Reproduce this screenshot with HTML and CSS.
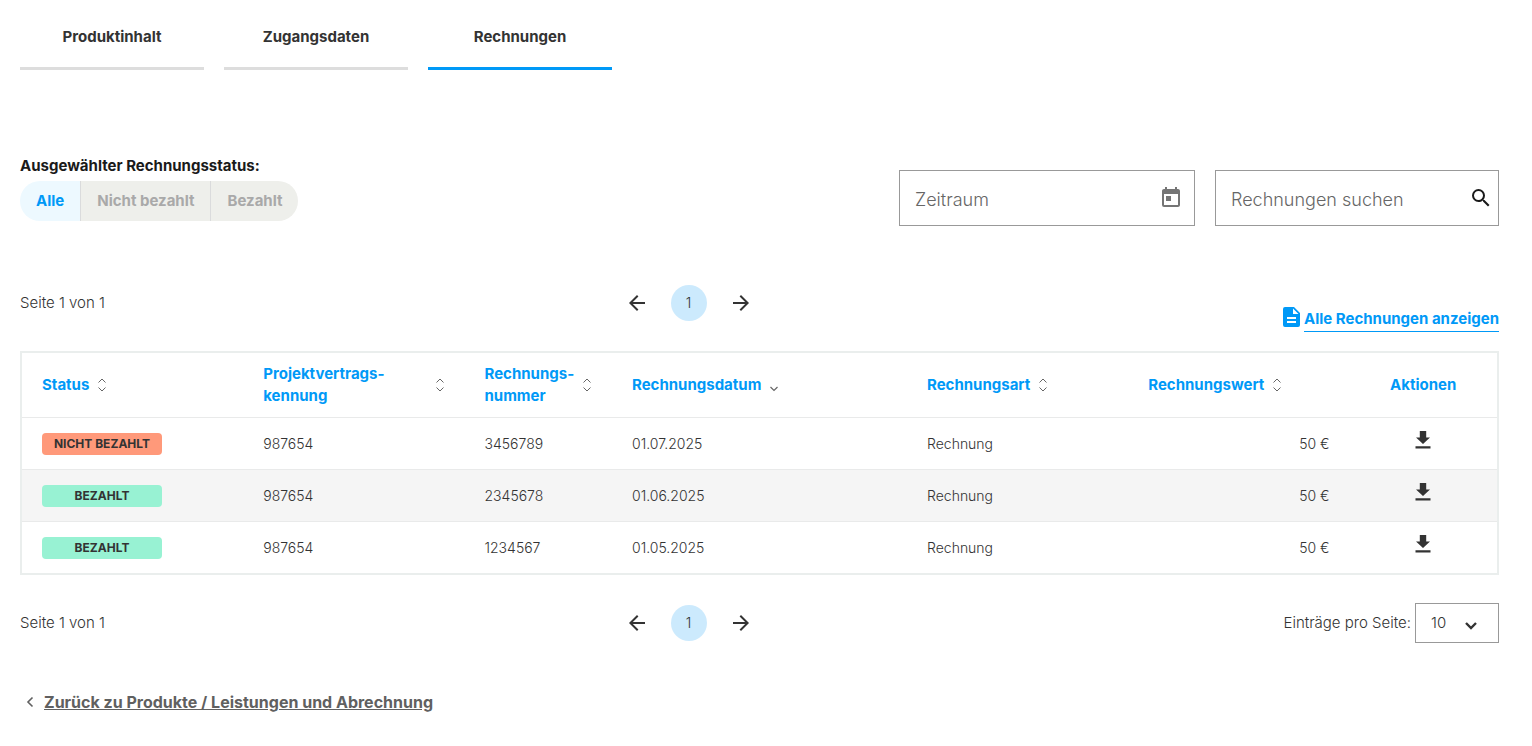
FILE: index.html
```html
<!DOCTYPE html>
<html lang="de">
<head>
<meta charset="utf-8">
<meta name="viewport" content="width=device-width, initial-scale=1">
<title>Rechnungen</title>
<link rel="stylesheet" href="styles.css">
</head>
<body>
<svg class="sprite" aria-hidden="true">
  <symbol id="sort" viewBox="0 0 10 14"><path d="M1.5 4.5 5 1l3.500 3.500M1.500 9.500 5 13l3.500-3.500" fill="none" stroke="currentColor"/></symbol>
  <symbol id="sort-down" viewBox="0 0 10 14"><path d="M1.500 9 5 12.500 8.500 9" fill="none" stroke="currentColor" stroke-width="1.200"/></symbol>
  <symbol id="download" viewBox="0 0 24 24"><path d="M19 9.500h-3.800v-6.500h-6.400v6.500H5l7 6.500zM4.500 18.200v2.200h15v-2.200z" fill="currentColor"/></symbol>
  <symbol id="arrow-left" viewBox="0 0 24 24"><path d="M20 11H7.830l5.590-5.590L12 4l-8 8 8 8 1.410-1.410L7.830 13H20z" fill="currentColor"/></symbol>
  <symbol id="arrow-right" viewBox="0 0 24 24"><path d="m12 4-1.410 1.410L16.170 11H4v2h12.170l-5.580 5.590L12 20l8-8z" fill="currentColor"/></symbol>
</svg>

<main class="page">
  <nav class="tabs">
    <a class="tab" href="#produktinhalt">Produktinhalt</a>
    <a class="tab" href="#zugangsdaten">Zugangsdaten</a>
    <a class="tab tab-active" href="#rechnungen" aria-current="page">Rechnungen</a>
  </nav>

  <section class="filters">
    <div class="status-filter">
      <h2 class="filter-title" id="status-title">Ausgewählter Rechnungsstatus:</h2>
      <div class="toggle" role="group" aria-labelledby="status-title">
        <button class="toggle-item toggle-active" type="button" aria-pressed="true">Alle</button>
        <button class="toggle-item" type="button" aria-pressed="false">Nicht bezahlt</button>
        <button class="toggle-item" type="button" aria-pressed="false">Bezahlt</button>
      </div>
    </div>
    <div class="fields">
      <div class="field field-period">
        <input class="field-input" type="text" placeholder="Zeitraum" aria-label="Zeitraum">
        <button class="icon-button calendar" type="button" aria-label="Kalender öffnen">
          <svg width="24" height="24" viewBox="0 0 24 24"><path d="M19 3h-1V1h-2v2H8V1H6v2H5c-1.110 0-1.990.900-1.990 2L3 19a2 2 0 0 0 2 2h14c1.100 0 2-.900 2-2V5c0-1.100-.900-2-2-2zm0 16H5V8h14v11zM7 10h5v5H7z" fill="currentColor"/></svg>
        </button>
      </div>
      <div class="field field-search">
        <input class="field-input" type="text" placeholder="Rechnungen suchen" aria-label="Rechnungen suchen">
        <button class="icon-button" type="button" aria-label="Suchen">
          <svg width="24" height="24" viewBox="0 0 24 24"><path d="M15.500 14h-.790l-.280-.270A6.471 6.471 0 0 0 16 9.500 6.500 6.500 0 1 0 9.500 16c1.610 0 3.090-.590 4.230-1.570l.270.280v.790l5 4.990L20.490 19l-4.990-5zm-6 0C7.010 14 5 11.990 5 9.500S7.010 5 9.500 5 14 7.010 14 9.500 11.990 14 9.500 14z" fill="currentColor"/></svg>
        </button>
      </div>
    </div>
  </section>

  <div class="pager-row">
    <span class="page-info">Seite 1 von 1</span>
    <div class="pager">
      <button class="icon-button" type="button" aria-label="Vorherige Seite"><svg width="24" height="24"><use href="#arrow-left"/></svg></button>
      <button class="page-number" type="button" aria-current="page">1</button>
      <button class="icon-button" type="button" aria-label="Nächste Seite"><svg width="24" height="24"><use href="#arrow-right"/></svg></button>
    </div>
    <div class="pager-end all-invoices">
      <svg width="17" height="20" viewBox="0 0 17 20"><path d="M2 0h9l6 6v12a2 2 0 0 1-2 2H2a2 2 0 0 1-2-2V2a2 2 0 0 1 2-2zm8 1.500V7h5.500zM4 10v2h9v-2zm0 4v2h9v-2z" fill="currentColor" fill-rule="evenodd"/></svg>
      <a class="all-link" href="#alle">Alle Rechnungen anzeigen</a>
    </div>
  </div>

  <div class="table-frame">
    <table class="invoices">
      <colgroup><col class="w15"><col class="w15"><col class="w10"><col class="w20"><col class="w15"><col class="w15"><col class="w10"></colgroup>
      <thead>
        <tr>
          <th><button class="sort" type="button">Status<svg width="10" height="14"><use href="#sort"/></svg></button></th>
          <th><button class="sort" type="button"><span>Projektvertrags-<wbr>kennung</span><svg width="10" height="14"><use href="#sort"/></svg></button></th>
          <th><button class="sort" type="button"><span>Rechnungs-<wbr>nummer</span><svg width="10" height="14"><use href="#sort"/></svg></button></th>
          <th aria-sort="descending"><button class="sort" type="button">Rechnungsdatum<svg width="10" height="14"><use href="#sort-down"/></svg></button></th>
          <th><button class="sort" type="button">Rechnungsart<svg width="10" height="14"><use href="#sort"/></svg></button></th>
          <th><button class="sort" type="button">Rechnungswert<svg width="10" height="14"><use href="#sort"/></svg></button></th>
          <th class="actions">Aktionen</th>
        </tr>
      </thead>
      <tbody>
        <tr>
          <td><span class="badge badge-open">NICHT BEZAHLT</span></td>
          <td>987654</td><td>3456789</td><td>01.07.2025</td><td>Rechnung</td><td class="amount">50 €</td>
          <td class="actions"><button class="icon-button download" type="button" aria-label="Rechnung 3456789 herunterladen"><svg width="24" height="24"><use href="#download"/></svg></button></td>
        </tr>
        <tr>
          <td><span class="badge badge-paid">BEZAHLT</span></td>
          <td>987654</td><td>2345678</td><td>01.06.2025</td><td>Rechnung</td><td class="amount">50 €</td>
          <td class="actions"><button class="icon-button download" type="button" aria-label="Rechnung 2345678 herunterladen"><svg width="24" height="24"><use href="#download"/></svg></button></td>
        </tr>
        <tr>
          <td><span class="badge badge-paid">BEZAHLT</span></td>
          <td>987654</td><td>1234567</td><td>01.05.2025</td><td>Rechnung</td><td class="amount">50 €</td>
          <td class="actions"><button class="icon-button download" type="button" aria-label="Rechnung 1234567 herunterladen"><svg width="24" height="24"><use href="#download"/></svg></button></td>
        </tr>
      </tbody>
    </table>
  </div>

  <div class="pager-row pager-bottom">
    <span class="page-info">Seite 1 von 1</span>
    <div class="pager">
      <button class="icon-button" type="button" aria-label="Vorherige Seite"><svg width="24" height="24"><use href="#arrow-left"/></svg></button>
      <button class="page-number" type="button" aria-current="page">1</button>
      <button class="icon-button" type="button" aria-label="Nächste Seite"><svg width="24" height="24"><use href="#arrow-right"/></svg></button>
    </div>
    <div class="pager-end page-size">
      <label for="page-size">Einträge pro Seite:</label>
      <div class="select-wrap">
        <select class="select" id="page-size"><option>10</option><option>25</option><option>50</option></select>
        <svg class="select-arrow" width="12" height="8" viewBox="0 0 12 8"><path d="m1 1 5 5 5-5" fill="none" stroke="currentColor" stroke-width="2.400"/></svg>
      </div>
    </div>
  </div>

  <div class="back">
    <svg width="8" height="12" viewBox="0 0 8 12"><path d="M6.500 1.500 2 6l4.500 4.500" fill="none" stroke="currentColor" stroke-width="1.600"/></svg>
    <a class="back-link" href="#produkte">Zurück zu Produkte / Leistungen und Abrechnung</a>
  </div>
</main>
</body>
</html>
```

FILE: styles.css
```css
* { box-sizing: border-box; }

body {
  margin: 0;
  background: #fff;
  color: #333;
  font: 300 14px/22px Inter, "Open Sans", sans-serif;
}

button, input, select { font: inherit; color: inherit; }

button {
  margin: 0;
  padding: 0;
  border: 0;
  background: none;
  cursor: pointer;
}

svg { display: block; flex: none; }

.sprite { position: absolute; width: 0; height: 0; }

.page { padding: 0 33px 32px 20px; }

.tabs { display: flex; gap: 20px; }

.tab {
  width: 184px;
  height: 70px;
  padding-top: 26px;
  border-bottom: 3px solid #ddd;
  color: #333;
  font-size: 15px;
  font-weight: 700;
  text-align: center;
  text-decoration: none;
}

.tab-active { border-color: #0099f7; }

.filters {
  display: flex;
  justify-content: space-between;
  align-items: flex-end;
  margin-top: 85px;
}

.filter-title {
  margin: 0 0 4px;
  color: #1a1a1a;
  font-size: 15px;
  font-weight: 700;
  line-height: 22px;
}

.toggle {
  display: inline-flex;
  overflow: hidden;
  height: 40px;
  margin-bottom: 5px;
  border-radius: 20px;
}

.toggle-item {
  padding: 0 16px;
  border-left: 1px solid #dadbdc;
  background: #eeefeb;
  color: #a9a9a9;
  font-size: 15px;
  font-weight: 700;
}

.toggle-active {
  border-left: 0;
  background: #edf9ff;
  color: #0099f7;
}

.fields { display: flex; gap: 20px; }

.field {
  display: flex;
  align-items: center;
  height: 56px;
  border: 1px solid #999;
}

.field-period { width: 296px; padding-right: 11px; }
.field-search { width: 284px; padding-right: 5px; }

.field-input {
  flex: 1;
  min-width: 0;
  height: 100%;
  padding: 2px 0 0 15px;
  border: 0;
  background: none;
  font-size: 18px;
  outline: 0;
}

.field-input::placeholder { color: #666; opacity: 1; }

.field .icon-button { color: #1a1a1a; }
.field .calendar { color: #757575; }

.pager-row {
  display: flex;
  justify-content: space-between;
  align-items: center;
  min-height: 40px;
  margin-top: 57px;
  font-size: 15px;
}

.page-info { min-width: 86px; }

.pager { display: flex; align-items: center; gap: 22px; }

.page-number {
  width: 36px;
  height: 36px;
  border-radius: 50%;
  background: #cceafd;
  font-size: 14px;
}

.pager-end { display: flex; justify-content: flex-end; min-width: 228px; }

.all-invoices {
  align-items: flex-start;
  align-self: flex-end;
  gap: 4px;
  margin-bottom: -9px;
  color: #0099f7;
}

.all-link {
  border-bottom: 1px solid #0099f7;
  color: #0099f7;
  font-weight: 700;
  line-height: 24px;
  text-decoration: none;
}

.table-frame { margin-top: 28px; border: 2px solid #eaeeed; }

.invoices {
  width: 100%;
  border-collapse: collapse;
  table-layout: fixed;
}

.w10 { width: 10%; }
.w15 { width: 15%; }
.w20 { width: 20%; }

.invoices th, .invoices td { padding: 0 20px; text-align: left; }

.invoices th {
  height: 64px;
  color: #0099f7;
  font-size: 15px;
  font-weight: 700;
}

.invoices td { height: 52px; padding-top: 2px; font-size: 14px; }
.invoices tbody tr { border-top: 1px solid #e9eaea; }
.invoices tbody tr:nth-child(even) { background: #f5f5f5; }
.invoices .amount { text-align: right; }
.invoices .actions { text-align: center; }

.sort {
  display: flex;
  align-items: center;
  gap: 8px;
  text-align: left;
}

.sort svg { color: #666; }

.badge {
  display: block;
  width: 120px;
  border-radius: 4px;
  font-size: 12px;
  font-weight: 700;
  line-height: 22px;
  text-align: center;
}

.badge-open { background: #ff997a; }
.badge-paid { background: #98f2d3; }

.download { display: block; margin: 0 auto; padding-bottom: 8px; }

.pager-bottom { margin-top: 28px; }

.page-size { align-items: center; gap: 4px; }

.select-wrap { position: relative; }

.select {
  display: block;
  width: 84px;
  height: 40px;
  padding: 0 15px;
  border: 1px solid #999;
  border-radius: 0;
  background: #fff;
  appearance: none;
}

.select-arrow {
  position: absolute;
  top: 19px;
  right: 22px;
  pointer-events: none;
}

.back {
  display: flex;
  align-items: center;
  gap: 10px;
  margin-top: 48px;
  padding-left: 6px;
  color: #606060;
}

.back-link { color: #606060; font-size: 16px; font-weight: 700; }
```
